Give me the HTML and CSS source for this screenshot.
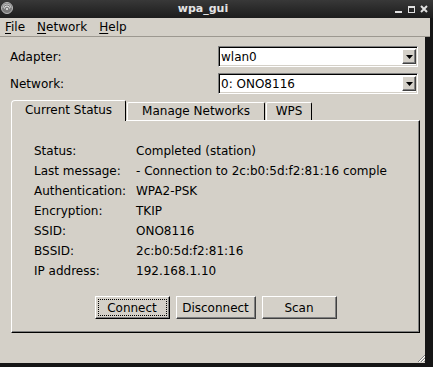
FILE: index.html
```html
<!DOCTYPE html>
<html lang="en">
<head>
    <meta charset="UTF-8">
    <title>wpa_gui</title>
    <link rel="stylesheet" href="styles.css">
</head>
<body>
    <div class="window">
        <div class="titlebar">
            <svg class="app-icon" width="16" height="18" viewBox="0 0 16 18">
                <circle cx="7" cy="8" r="5.5" fill="#7a7a7a" stroke="#b8b8b8" stroke-width="1"/>
                <path d="M4.5 8.5 a2.5 2.5 0 0 1 5 0" fill="none" stroke="#e8e8e8" stroke-width="1"/>
                <path d="M3 8 a4 4 0 0 1 8 0" fill="none" stroke="#d0d0d0" stroke-width="0.8"/>
                <circle cx="7" cy="9" r="1" fill="#eee"/>
            </svg>
            <span class="title">wpa_gui</span>
            <svg class="wm-buttons" width="43" height="18" viewBox="0 0 43 18">
                <rect x="5" y="11" width="7" height="2" fill="#e0e0e0"/>
                <rect x="18.5" y="6.5" width="6" height="6" fill="none" stroke="#e0e0e0" stroke-width="1"/>
                <rect x="18" y="6" width="7" height="2" fill="#e0e0e0"/>
                <path d="M31 6 L37 12 M37 6 L31 12" stroke="#e0e0e0" stroke-width="2"/>
            </svg>
        </div>

        <div class="menubar">
            <span class="menu-item"><u>F</u>ile</span>
            <span class="menu-item"><u>N</u>etwork</span>
            <span class="menu-item"><u>H</u>elp</span>
        </div>

        <div class="main">
            <div class="field-row">
                <span class="field-label">Adapter:</span>
                <div class="combo">
                    <span class="combo-text">wlan0</span>
                    <span class="combo-btn">
                        <svg width="7" height="4" viewBox="0 0 7 4"><path d="M0 0 H7 L3.5 4 Z" fill="#000"/></svg>
                    </span>
                </div>
            </div>
            <div class="field-row">
                <span class="field-label">Network:</span>
                <div class="combo">
                    <span class="combo-text">0: ONO8116</span>
                    <span class="combo-btn">
                        <svg width="7" height="4" viewBox="0 0 7 4"><path d="M0 0 H7 L3.5 4 Z" fill="#000"/></svg>
                    </span>
                </div>
            </div>

            <div class="tabs">
                <div class="tab-bar">
                    <div class="tab active">Current Status</div>
                    <div class="tab">Manage Networks</div>
                    <div class="tab">WPS</div>
                </div>
                <div class="tab-pane">
                    <div class="status-grid">
                        <span>Status:</span><span>Completed (station)</span>
                        <span>Last message:</span><span>- Connection to 2c:b0:5d:f2:81:16 comple</span>
                        <span>Authentication:</span><span>WPA2-PSK</span>
                        <span>Encryption:</span><span>TKIP</span>
                        <span>SSID:</span><span>ONO8116</span>
                        <span>BSSID:</span><span>2c:b0:5d:f2:81:16</span>
                        <span>IP address:</span><span>192.168.1.10</span>
                    </div>
                    <div class="buttons">
                        <button class="btn btn-focus">Connect</button>
                        <button class="btn btn-wide">Disconnect</button>
                        <button class="btn">Scan</button>
                    </div>
                </div>
            </div>

            <svg class="grip" width="8" height="8" viewBox="0 0 8 8">
                <path d="M8 1 L1 8 M8 4 L4 8 M8 7 L7 8" stroke="#808080" stroke-width="1"/>
                <path d="M8 2 L2 8 M8 5 L5 8" stroke="#fff" stroke-width="1"/>
            </svg>
        </div>
    </div>
</body>
</html>
```

FILE: styles.css
```css
body {
    margin: 0;
    padding: 0;
    background-color: #151515;
    font-family: 'DejaVu Sans', sans-serif;
    font-size: 12px;
    color: #000;
}
.window {
    width: 433px;
    height: 367px;
    display: flex;
    flex-direction: column;
    background-color: #151515;
}
.titlebar {
    height: 18px;
    display: flex;
    align-items: center;
    background: linear-gradient(#383838, #1c1c1c);
}
.app-icon {
    flex: none;
}
.title {
    flex: 1;
    text-align: center;
    color: #e4e4e4;
    font-weight: bold;
    font-size: 11px;
    line-height: 18px;
}
.wm-buttons {
    flex: none;
}
.menubar {
    width: 430px;
    height: 19px;
    display: flex;
    align-items: center;
    gap: 12px;
    padding-left: 5px;
    box-sizing: border-box;
    background-color: #d4d0c8;
    border-bottom: 1px solid #9c9890;
}
.menu-item u {
    text-decoration-thickness: 1px;
    text-underline-offset: 2px;
}
.main {
    position: relative;
    width: 425px;
    height: 326px;
    box-sizing: border-box;
    padding: 9px 7px 0 10px;
    background-color: #d4d0c8;
}
.field-row {
    display: flex;
    align-items: center;
    height: 21px;
    margin-bottom: 6px;
}
.field-label {
    width: 208px;
}
.combo {
    width: 200px;
    height: 21px;
    box-sizing: border-box;
    display: flex;
    align-items: center;
    background-color: #fff;
    border: 1px solid;
    border-color: #808080 #fff #fff #808080;
    box-shadow: inset 1px 1px #000, inset -1px -1px #d4d0c8;
}
.combo-text {
    flex: 1;
    padding-left: 2px;
}
.combo-btn {
    width: 14px;
    height: 15px;
    margin-right: 1px;
    display: flex;
    align-items: center;
    justify-content: center;
    background-color: #d4d0c8;
    border: 1px solid;
    border-color: #fff #404040 #404040 #fff;
    box-shadow: inset -1px -1px #808080;
    box-sizing: border-box;
}
.tabs {
    width: 409px;
    margin-left: 1px;
}
.tab-bar {
    display: flex;
    align-items: flex-end;
    height: 20px;
}
.tab {
    height: 18px;
    box-sizing: border-box;
    padding: 0 12px;
    line-height: 17px;
    border-top: 1px solid #fff;
    border-left: 1px solid #fff;
    border-right: 1px solid #000;
    border-top-left-radius: 2px;
    border-top-right-radius: 2px;
    background-color: #d4d0c8;
}
.tab.active {
    position: relative;
    height: 21px;
    margin-bottom: -1px;
    line-height: 19px;
    width: 115px;
    text-align: center;
    padding: 0;
    border-top-left-radius: 4px;
    z-index: 1;
}
.tab + .tab {
    margin-left: 1px;
}
.tab:nth-child(2) {
    width: 138px;
    text-align: center;
    padding: 0;
}
.tab:nth-child(3) {
    width: 46px;
    text-align: center;
    padding: 0;
}
.tab-pane {
    height: 213px;
    box-sizing: border-box;
    border-top: 1px solid #fff;
    border-left: 1px solid #fff;
    border-right: 1px solid #000;
    border-bottom: 1px solid #000;
    box-shadow: inset -1px -1px #808080;
    padding: 20px 0 0 22px;
}
.status-grid {
    display: grid;
    grid-template-columns: 102px auto;
    grid-auto-rows: 20px;
    line-height: 20px;
    white-space: nowrap;
}
.buttons {
    display: flex;
    justify-content: center;
    gap: 6px;
    margin: 15px 0 0 -22px;
}
.btn {
    width: 75px;
    height: 23px;
    font-family: 'DejaVu Sans', sans-serif;
    font-size: 12px;
    color: #000;
    background-color: #d4d0c8;
    border: 1px solid;
    border-color: #fff #404040 #404040 #fff;
    box-shadow: inset -1px -1px #808080;
    padding: 0;
}
.btn-wide {
    width: 80px;
}
.btn-focus {
    outline: 1px dotted #000;
    outline-offset: -4px;
    border-color: #fff #000 #000 #fff;
}
.grip {
    position: absolute;
    right: 0;
    bottom: 1px;
}
```
